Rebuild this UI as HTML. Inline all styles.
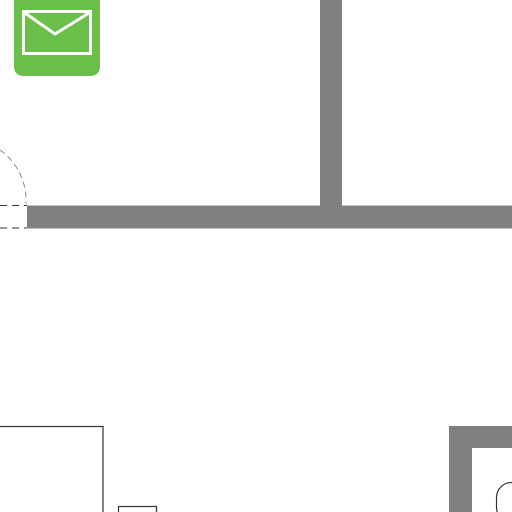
<!DOCTYPE html>
<html><head><style>html,body{margin:0;padding:0;background:#fff;width:512px;height:512px;overflow:hidden}</style></head>
<body>
<svg width="512" height="512" viewBox="0 0 512 512" xmlns="http://www.w3.org/2000/svg" style="display:block">
<rect x="0" y="0" width="512" height="512" fill="#fff"/>
<!-- green icon -->
<path d="M14 -5 H100 V66 Q100 76 90 76 H24 Q14 76 14 66 Z" fill="#6abf4b"/>
<rect x="23.5" y="11.5" width="67" height="42" fill="none" stroke="#fff" stroke-width="3"/>
<path d="M25 13 L55 34 L89 13" fill="none" stroke="#fff" stroke-width="3"/>
<!-- walls -->
<rect x="320" y="0" width="22" height="206" fill="#808083"/>
<rect x="27" y="205.5" width="485" height="23" fill="#808083"/>
<!-- door -->
<path d="M0 150 A 62 62 0 0 1 26 204" fill="none" stroke="#888" stroke-width="1" stroke-dasharray="6,4"/>
<line x1="0" y1="205.5" x2="27" y2="205.5" stroke="#333" stroke-width="1" stroke-dasharray="7,5"/>
<line x1="0" y1="228" x2="27" y2="228" stroke="#333" stroke-width="1" stroke-dasharray="7,5"/>
<!-- bottom right wall -->
<rect x="449" y="426" width="63" height="22" fill="#808083"/>
<rect x="449" y="426" width="23" height="86" fill="#808083"/>
<rect x="496.5" y="482.5" width="40" height="40" rx="15" fill="none" stroke="#333" stroke-width="1.2"/>
<!-- bottom left -->
<rect x="-2" y="426.5" width="105" height="100" fill="none" stroke="#333" stroke-width="1.2"/>
<rect x="118.5" y="506.5" width="38" height="20" fill="none" stroke="#333" stroke-width="1.2"/>
</svg>
</body></html>
